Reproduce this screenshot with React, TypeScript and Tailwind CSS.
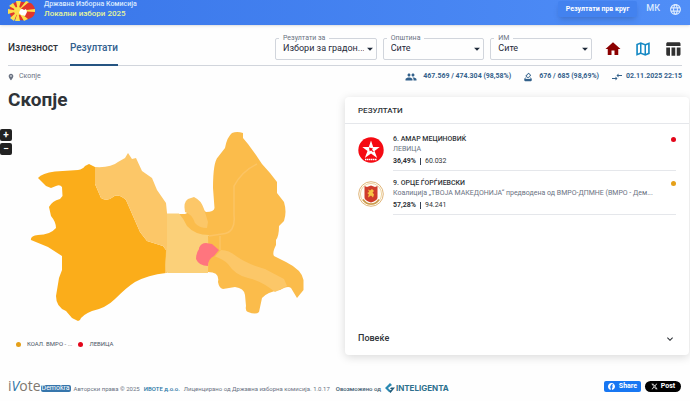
import React from 'react';
import {
  MdArrowDropDown,
  MdCompareArrows,
  MdExpandMore,
  MdHome,
  MdHowToVote,
  MdLanguage,
  MdLocationOn,
  MdPeople,
  MdTableChart,
} from 'react-icons/md';
import { FaFacebook, FaXTwitter } from 'react-icons/fa6';

interface FilterSelectProps {
  id: string;
  label: string;
  value: string;
}

interface Candidate {
  name: string;
  party: string;
  percent: string;
  votes: string;
  dot: string;
  logo: React.ReactNode;
}

const FilterSelect: React.FC<FilterSelectProps> = ({ id, label, value }) => (
  <div className="relative flex-1 min-w-0">
    <label htmlFor={id} className="absolute -top-1 left-1 z-10 bg-[#fefefe] px-1 text-[7px] leading-[8px] text-gray-500">
      {label}
    </label>
    <select
      id={id}
      className="block h-[22px] w-full appearance-none rounded-xs border border-gray-300 bg-transparent pl-[7px] pr-3 text-[9px] text-gray-800"
    >
      <option>{value}</option>
    </select>
    <MdArrowDropDown className="pointer-events-none absolute right-0 top-1 h-[14px] w-[14px] text-gray-800" />
  </div>
);

const SunEmblem: React.FC = () => (
  <svg viewBox="0 0 28 24" className="h-6 w-7 shrink-0" aria-hidden="true">
    <path d="M4 3Q8 0 15 1t8 1q4 3 4 8t-4 7q-6 3-11 2T4 17Q-1 10 4 3z" fill="#e2352c" />
    <g fill="#fbdf4d">
      <path d="M10 10 8 0h5zM10 10 7 20h5zM10 10 0 8v5zM10 10 27 8v3z" />
      <path d="M10 10 1 5l4-3zM10 10 21 1l-3-1zM10 10 2 17l4 3zM10 10 20 18l-4 2z" />
    </g>
    <circle cx="10" cy="10" r="4" fill="#fbdf4d" />
    <path d="M12 9q2-2 4 0l2-1 1 3-2 4-4-1-2-2z" fill="#fff" />
  </svg>
);

const MapIcon: React.FC = () => (
  <svg viewBox="0 0 24 24" className="h-[18px] w-[18px]" aria-hidden="true">
    <path d="M3 5.200 9 3l6 2.200L21 3v15.800L15 21l-6-2.200L3 21z" fill="#1689c4" />
    <path d="M10 5.600l4 1.500v11.300l-4-1.500zM5.200 6.800 8 5.700v11L5.200 17.900zM16 7.300l2.800-1.200v11L16 18.300z" fill="#fff" />
  </svg>
);

const LevicaLogo: React.FC = () => (
  <svg viewBox="0 0 26 26" className="h-[26px] w-[26px]" aria-hidden="true">
    <circle cx="13" cy="13" r="12.7" fill="#f50a12" />
    <path d="M13 3.500l2.200 6.500h6.500l-5.200 4 2.700 7-6.200-4.400L6.800 21l2.700-7-5.200-4h6.500z" fill="#fff" />
    <path d="M11 10.500l4 .9-1 1.300 1.800 1.800-.8.8-1.800-1.800-1.500.8z" fill="#f50a12" />
    <path d="M7 22.500h12" stroke="#fff" strokeWidth="1.6" strokeDasharray="1.5 .5" />
  </svg>
);

const VmroLogo: React.FC = () => (
  <svg viewBox="0 0 26 26" className="h-[26px] w-[26px]" aria-hidden="true">
    <circle cx="13" cy="13" r="12.3" fill="#fffdf6" stroke="#d8a25a" strokeWidth=".8" />
    <circle cx="13" cy="13" r="10.6" fill="none" stroke="#e9c98f" strokeWidth=".8" />
    <path d="M6.500 5l2.500 1 4-1.400L17 6l2.500-1v11.500q0 3-6.500 5-6.500-2-6.500-5z" fill="#cf3c2b" />
    <path d="M10 8.500l2 1 2-1.500 2 2-1.500 1.500 1.500 2-1 3-2-2-3 2 .8-3.200-1.600-1.300 2-1z" fill="#f6c445" />
    <path d="M5 18.500q3 4.500 8 4.500t8-4.500" fill="none" stroke="#c99a4e" strokeWidth="1.5" />
  </svg>
);

const candidates: Candidate[] = [
  {
    name: '6. АМАР МЕЦИНОВИЌ',
    party: 'ЛЕВИЦА',
    percent: '36,49%',
    votes: '60.032',
    dot: 'bg-[#e3061a]',
    logo: <LevicaLogo />,
  },
  {
    name: '9. ОРЦЕ ЃОРЃИЕВСКИ',
    party: 'Коалиција „ТВОЈА МАКЕДОНИЈА“ предводена од ВМРО-ДПМНЕ (ВМРО - Дем...',
    percent: '57,28%',
    votes: '94.241',
    dot: 'bg-[#e5a019]',
    logo: <VmroLogo />,
  },
];

const SkopjeMap: React.FC = () => (
  <svg viewBox="28 130 280 194" className="block w-full" role="img" aria-label="Скопје">
    {/* North-east and south-east */}
    <path
      fill="#fbbc4b"
      d="M179 214H185L200 207 206 212Q214 212 214.500 208L213 188Q213 162 218 157L225 148Q227 137 232 133 237 131 243 133L243 138 248 144 256 155 262 164 270 173 277 182V193L284 202Q287 212 284 221L279 226Q279 236 276 240V245Q272 253 274 256L286 262Q302 270 303.500 280V290L297 298 291 288Q288 285 280 290 267 292 262 298L259 312Q256 315 248 312 245 311 246 306L245 295Q244 288 235 287L223 289Q219 288 218 282 220 272 208 272L190 245Z"
    />
    {/* West */}
    <path
      fill="#fbad1a"
      d="M38 178Q42 173 55 171.500L78 170Q83 169 85 166L89 164 95 167V184L101 198Q107 202 113 197 118 193 126 200L140 232 147 241 163 246 166 250 166 273Q148 275 135 282 127 287 115 299 106 308 92 311 82 315 80 320L78 321 72 318 66 311Q56 307 56 296L59 278 62 270V256L48 247 31 240Q30 236 38 235 50 235 56 228 56 222 51 216L49 207Q52 201 60 199L62.500 196 62 187Q60 184 56 186L51 188 46 186Z"
    />
    {/* North-west */}
    <path
      fill="#fcc768"
      d="M95 167Q111 168 118 162L125 158 128 153 132 159 136 158 142 171 152 178 157 190 166 203 167 213V273H165L166 250 163 246 147 241 140 232 126 200Q118 193 113 197 107 202 101 198L95 184Z"
    />
    {/* Centre */}
    <path
      fill="#fbd079"
      d="M167 213.500H179Q184 219 187 226 195 235 209 235L208 273H168Q165 273 165.500 262L167 245Z"
    />
    <path fill="#fcc768" d="M185 212Q183 202 188 199L194 197Q201 200 204 209L208 222 207 228Q199 228 195 223 192 214 185 212Z" />
    <path fill="#fcc768" d="M214 256L219 250Q228 249 236 256 247 264 265 269L284 279 287 286 279 290 275 292Q262 281 248 278 235 275 228 264 223 259 214 256Z" />
    <path fill="#fbbc4b" d="M208 236H221V250L209 263Z" />
    <path fill="#ff757e" d="M199 248Q201 243 206 243L212 244 219 250 214 256Q208 259 208 266 199 266 196 259 196 253 199 249Z" />
    <path fill="none" stroke="#fcc464" strokeWidth="1.500" d="M257 164Q242 171 234 186V215Q236 233 222 234L209 236M220 236V250" />
  </svg>
);

const App: React.FC = () => {
  return (
    <div className="min-h-screen bg-[#fefefe] font-['Roboto',sans-serif] text-[#2f3338]">
      {/* Top bar */}
      <header className="flex h-[25px] items-center justify-between overflow-hidden bg-linear-to-r from-[#3875e9] to-[#508ef7] px-2 shadow-sm">
        <div className="flex items-center gap-2">
          <SunEmblem />
          <div className="pb-[7px] text-[8px] leading-[9px]">
            <div className="text-[7px] font-medium text-blue-100">Државна Изборна Комисија</div>
            <div className="font-medium text-[#e5f59b]">Локални избори 2025</div>
          </div>
        </div>
        <div className="flex items-center gap-[9px] pb-[7px] text-blue-100">
          <button type="button" className="h-4 rounded-xs bg-[#4382ef] px-2 text-[7px] font-bold text-white shadow-md">
            Резултати прв круг
          </button>
          <button type="button" className="text-[9px] font-medium">МК</button>
          <button type="button" aria-label="Јазик">
            <MdLanguage className="h-[13px] w-[13px]" />
          </button>
        </div>
      </header>

      {/* Tabs and filters */}
      <div className="mx-2 flex h-[41px] items-stretch justify-between border-b border-gray-300">
        <nav className="flex gap-3 text-[10px] font-medium">
          <a href="#izleznost" className="flex items-center pt-1">Излезност</a>
          <a href="#rezultati" className="-mb-px flex items-center border-b-2 border-[#255482] pt-[6px] text-[#32618f]">Резултати</a>
        </nav>
        <div className="flex w-[407px] items-center gap-3 pt-2">
          <div className="flex min-w-0 flex-1 gap-[6px]">
            <FilterSelect id="type" label="Резултати за" value="Избори за градон..." />
            <FilterSelect id="municipality" label="Општина" value="Сите" />
            <FilterSelect id="station" label="ИМ" value="Сите" />
          </div>
          <div className="flex gap-3">
            <a href="#home" aria-label="Почетна"><MdHome className="h-[18px] w-[18px] text-[#8b0000]" /></a>
            <a href="#map" aria-label="Мапа"><MapIcon /></a>
            <a href="#table" aria-label="Табела"><MdTableChart className="h-[18px] w-[18px] text-[#303030]" /></a>
          </div>
        </div>
      </div>

      {/* Breadcrumb and stats */}
      <div className="mx-2 flex h-[21px] items-center justify-between text-[7px]">
        <div className="flex items-center gap-1 text-gray-500">
          <MdLocationOn className="-ml-px h-2 w-2" />
          <span>Скопје</span>
        </div>
        <div className="flex items-center gap-3 font-bold text-[#33618b]">
          <span className="flex items-center gap-[6px]"><MdPeople className="h-3 w-3" />467.569 / 474.304 (98,58%)</span>
          <span className="flex items-center gap-[6px]"><MdHowToVote className="h-[10px] w-[10px]" />676 / 685 (98,69%)</span>
          <span className="flex items-center gap-[3px]"><MdCompareArrows className="h-3 w-3" />02.11.2025 22:15</span>
        </div>
      </div>

      <main className="grid grid-cols-2">
        <section>
          <h1 className="px-2 pt-px text-[19px] font-bold leading-6">Скопје</h1>
          <div className="relative pl-7 pr-[37px] pt-[18px]">
            <div className="absolute left-0 top-[17px] flex flex-col gap-[2px]">
              <button type="button" aria-label="Зголеми" className="flex h-3 w-3 items-center justify-center rounded-xs bg-[#222] text-[10px] font-bold leading-none text-white">+</button>
              <button type="button" aria-label="Намали" className="flex h-3 w-3 items-center justify-center rounded-xs bg-[#222] text-[10px] font-bold leading-none text-white">−</button>
            </div>
            <SkopjeMap />
          </div>
          <div className="flex items-center gap-[6px] pl-4 pt-[15px] text-[6px] leading-[10px] text-gray-600">
            <span className="h-[5px] w-[5px] rounded-full bg-[#e5a019]" />
            <span>КОАЛ. ВМРО - ...</span>
            <span className="h-[5px] w-[5px] rounded-full bg-[#e3061a]" />
            <span>ЛЕВИЦА</span>
          </div>
        </section>

        {/* Results card */}
        <section className="mr-px mt-[10px] flex min-h-[258px] flex-col rounded-sm bg-white shadow-[0_2px_10px_rgba(0,0,0,0.15)]">
          <h2 className="h-[27px] border-b border-gray-200 px-[13px] text-[8px] font-medium leading-[27px]">РЕЗУЛТАТИ</h2>
          <ul className="flex-1 px-[13px] pt-[3px]">
            {candidates.map((c) => (
              <li key={c.name} className="flex h-11 gap-[9px]">
                <div className="pt-[10px]">{c.logo}</div>
                <div className="min-w-0 flex-1 border-b border-gray-200 pt-[7px] text-[7px] leading-[10px]">
                  <div className="flex items-center justify-between">
                    <span className="font-medium">{c.name}</span>
                    <span className={`h-[5px] w-[5px] rounded-full ${c.dot}`} />
                  </div>
                  <div className="text-gray-500">{c.party}</div>
                  <div className="flex items-center gap-1 pt-[2px]">
                    <strong>{c.percent}</strong>
                    <span className="h-[7px] w-px bg-gray-700" />
                    <span>{c.votes}</span>
                  </div>
                </div>
              </li>
            ))}
          </ul>
          <button type="button" className="flex h-8 items-center justify-between px-[13px] text-[9px] font-medium">
            Повеќе
            <MdExpandMore className="h-3 w-3" />
          </button>
        </section>
      </main>

      <footer className="mt-[22px] flex items-center justify-between pl-2 pr-[9px] text-[6px] text-gray-500">
        <div className="flex items-center">
          <span className="font-['Open_Sans',sans-serif] text-[14px] leading-[18px] text-[#80786f]">
            i<span className="italic text-[#2d75a8]">V</span>ote
          </span>
          <span className="mt-1 rounded-xs bg-[#3676ac] px-px text-[7px] leading-[7px] text-white">Demokra</span>
          <span className="ml-[3px] mt-1">Авторски права © 2025</span>
          <a href="#ivote" className="ml-1 mt-1 font-medium text-[#2877a5]">ИВОТЕ д.о.о.</a>
          <span className="ml-1 mt-1">Лиценцирано од Државна изборна комисија. 1.0.17</span>
          <span className="ml-[6px] mt-1 font-medium text-[#3d5b70]">Овозможено од</span>
          <a href="#inteligenta" className="ml-1 mt-1 flex items-center gap-px font-['Inter',sans-serif] text-[8px] font-bold leading-[10px] text-[#2d708d]">
            <svg viewBox="0 0 10 10" className="h-[10px] w-[10px]" aria-hidden="true">
              <path d="M5 0 0 5l4 4 1.500-1.500L3 5l4-3z" fill="#2a89b2" />
              <path d="M6 4.500h4L5.500 10 4 8.500 7 6H5z" fill="#205b79" />
            </svg>
            INTELIGENTA
          </a>
        </div>
        <div className="flex items-center gap-1 text-[7px] font-bold text-white">
          <button type="button" className="flex h-[11px] w-[37px] items-center justify-center gap-1 rounded-xs bg-[#1877f2]">
            <FaFacebook className="h-[7px] w-[7px]" />Share
          </button>
          <button type="button" className="flex h-[11px] w-9 items-center justify-center gap-[3px] rounded-full bg-black">
            <FaXTwitter className="h-[7px] w-[7px]" />Post
          </button>
        </div>
      </footer>
    </div>
  );
};

export default App;
